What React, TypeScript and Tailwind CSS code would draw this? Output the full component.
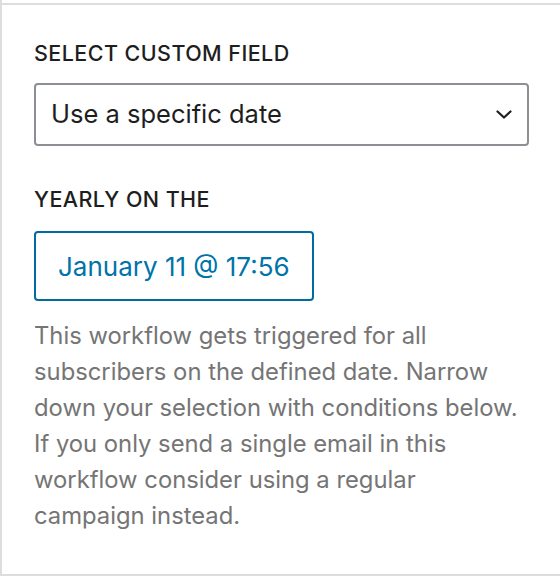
export default function App() {
  return (
    <div
      className="h-[576px] w-[560px] bg-white border-l-2 border-[#dddddd] pt-[3px]"
      style={{ fontFamily: 'Inter, "Liberation Sans", sans-serif' }}
    >
      <div className="h-[573px] border-t-2 border-b-2 border-[#dddddd] pl-[32px] pr-[30px] pt-[35px]">
        <label className="block text-[21.5px] font-medium uppercase leading-[26px] tracking-[0.02em] text-[#1e1e1e]">
          Select custom field
        </label>

        <div className="mt-[17px] flex h-[63px] w-[495px] items-center justify-between rounded-[4px] border-2 border-[#8c8f94] pl-[15px] pr-[15px]">
          <span className="text-[25.5px] text-[#1e1e1e]">Use a specific date</span>
          <svg className="h-[9px] w-[16px]" viewBox="0 0 16 9" fill="none">
            <path d="M1.5 1.5L8 7.5L14.5 1.5" stroke="#1e1e1e" strokeWidth={2.2} strokeLinecap="round" strokeLinejoin="round" />
          </svg>
        </div>

        <label className="mt-[40px] block text-[21.5px] font-medium uppercase leading-[26px] tracking-[0.02em] text-[#1e1e1e]">
          Yearly on the
        </label>

        <button className="mt-[19px] flex h-[70px] items-center rounded-[4px] border-2 border-[#006ba1] px-[22px] text-[26px] text-[#0073aa]">
          January 11 @ 17:56
        </button>

        <p className="mt-[17px] w-[492px] text-[23.8px] leading-[36px] text-[#757575]">
          This workflow gets triggered for all subscribers on the defined date. Narrow down your selection with
          conditions below. If you only send a single email in this workflow consider using a regular campaign
          instead.
        </p>
      </div>
    </div>
  );
}
